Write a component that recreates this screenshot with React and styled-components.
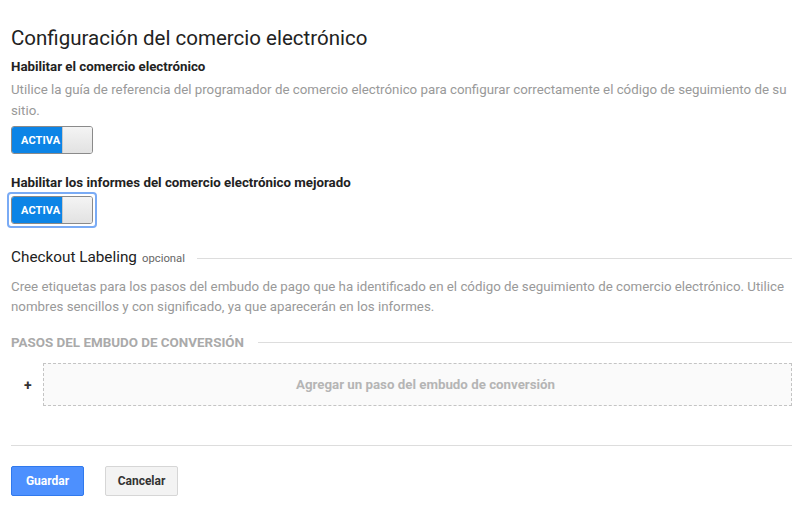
import React from "react"
import styled, { createGlobalStyle } from "styled-components"

const GlobalStyle = createGlobalStyle`
  body {
    margin: 0;
    background: #fff;
    font-family: Roboto, "Liberation Sans", Arial, sans-serif;
    color: #222;
  }
`

//  Layout
const Page = styled.div`
  width: 800px;
  height: 509px;
  padding: 24px 8px 0 11px;
  box-sizing: border-box;
`

const Title = styled.h1`
  font-size: 20.5px;
  font-weight: 400;
  margin: 0 0 6px 0;
  line-height: 28px;
  color: #222;
`

const Label = styled.div`
  font-size: 13.3px;
  font-weight: 700;
  color: #222;
  line-height: 18px;
  margin-top: ${p => p.$top || 0}px;
`

const Help = styled.p`
  font-size: 13.3px;
  line-height: ${p => p.$lh || 21}px;
  color: #999;
  margin: ${p => p.$margin || "3px 0 1px 0"};
`

//  Toggle
const ToggleWrap = styled.div`
  display: inline-flex;
  padding: 2px;
  border-radius: 4px;
  border: 2px solid ${p => (p.$focus ? "#7aabf5" : "transparent")};
  margin-left: -4px;
`

const Toggle = styled.div`
  display: flex;
  width: 82px;
  height: 28px;
  border: 1px solid #8a8a8a;
  border-radius: 3px;
  overflow: hidden;
  box-sizing: border-box;
`

const ToggleOn = styled.div`
  width: 50px;
  background: #0c84e6;
  color: #fff;
  font-size: 11px;
  font-weight: 700;
  display: flex;
  align-items: center;
  padding-left: 9px;
  box-sizing: border-box;
  letter-spacing: 0.1px;
`

const Knob = styled.div`
  flex: 1;
  background: linear-gradient(#f4f4f4, #e2e2e2);
  border-left: 1px solid #c8c8c8;
`

//  Section headings with rule
const SectionHead = styled.div`
  display: flex;
  align-items: center;
  gap: ${p => p.$gap || 12}px;
  margin: ${p => p.$margin || "0"};

  &::after {
    content: "";
    flex: 1;
    height: 1px;
    background: #ddd;
  }
`

const SectionTitle = styled.span`
  font-size: 15.3px;
  color: #222;
  line-height: 20px;

  small {
    font-size: 11.3px;
    color: #666;
    margin-left: 5px;
  }
`

const CapsTitle = styled.span`
  font-size: 13.4px;
  font-weight: 700;
  color: #aaa;
`

//  Funnel steps
const StepRow = styled.div`
  display: flex;
  align-items: center;
  margin-top: 13px;
`

const Plus = styled.span`
  width: 32px;
  padding-left: 13px;
  box-sizing: border-box;
  font-size: 14px;
  font-weight: 700;
  color: #333;
`

const AddStep = styled.div`
  flex: 1;
  height: 41px;
  padding-left: 16px;
  border: 1px dashed #c4c4c4;
  background: #fafafa;
  display: flex;
  align-items: center;
  justify-content: center;
  font-size: 13.3px;
  font-weight: 700;
  color: #b5b5b5;
`

const Divider = styled.hr`
  border: none;
  height: 1px;
  background: #ddd;
  margin: 39px 0 20px 0;
`

const Buttons = styled.div`
  display: flex;
  gap: 21px;
`

const Button = styled.button`
  width: 73px;
  height: 30px;
  border-radius: 2px;
  font-family: inherit;
  font-size: 12px;
  font-weight: 700;
  border: 1px solid ${p => (p.$primary ? "#3079ed" : "#d6d6d6")};
  background: ${p => (p.$primary ? "#4d90fe" : "#f3f3f3")};
  color: ${p => (p.$primary ? "#fff" : "#333")};
`

const Switch = ({ focus }) => (
  <ToggleWrap $focus={focus}>
    <Toggle>
      <ToggleOn>ACTIVA</ToggleOn>
      <Knob />
    </Toggle>
  </ToggleWrap>
)

const App = () => (
  <>
    <GlobalStyle />
    <Page>
      <Title>Configuración del comercio electrónico</Title>
      <Label>Habilitar el comercio electrónico</Label>
      <Help>
        Utilice la guía de referencia del programador de comercio electrónico para configurar correctamente el código de seguimiento de su
        sitio.
      </Help>
      <Switch />

      <Label $top={16}>Habilitar los informes del comercio electrónico mejorado</Label>
      <Switch focus />

      <SectionHead $margin="19px 0 0 0">
        <SectionTitle>
          Checkout Labeling<small>opcional</small>
        </SectionTitle>
      </SectionHead>
      <Help $lh={20} $margin="8px 0 0 0">
        Cree etiquetas para los pasos del embudo de pago que ha identificado en el código de seguimiento de comercio electrónico. Utilice
        nombres sencillos y con significado, ya que aparecerán en los informes.
      </Help>

      <SectionHead $margin="18px 0 0 0" $gap={14}>
        <CapsTitle>PASOS DEL EMBUDO DE CONVERSIÓN</CapsTitle>
      </SectionHead>
      <StepRow>
        <Plus>+</Plus>
        <AddStep>Agregar un paso del embudo de conversión</AddStep>
      </StepRow>

      <Divider />

      <Buttons>
        <Button $primary>Guardar</Button>
        <Button>Cancelar</Button>
      </Buttons>
    </Page>
  </>
)

export default App
